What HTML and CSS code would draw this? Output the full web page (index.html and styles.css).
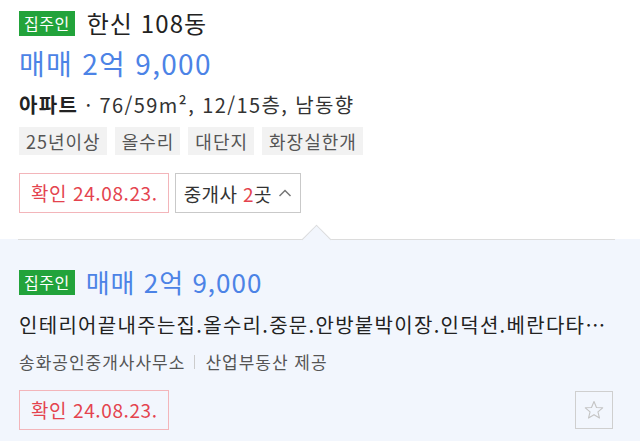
FILE: index.html
```html
<!DOCTYPE html>
<html lang="ko">
  <head>
    <meta charset="UTF-8" />
    <meta name="viewport" content="width=device-width, initial-scale=1.0" />
    <title>매물 상세</title>
    <link rel="stylesheet" href="styles.css">
  </head>
  <body>
    <div class="item">
      <div class="item-head">
        <span class="badge">집주인</span>
        <h2 class="name">한신 108동</h2>
      </div>
      <p class="price">매매 2억 9,000</p>
      <p class="spec"><strong>아파트</strong> · 76/59m², 12/15층, 남동향</p>
      <div class="tags">
        <span class="tag">25년이상</span>
        <span class="tag">올수리</span>
        <span class="tag">대단지</span>
        <span class="tag">화장실한개</span>
      </div>
      <div class="actions">
        <span class="confirm">확인 24.08.23.</span>
        <button class="agents" type="button">
          <span>중개사 <em>2</em>곳</span>
          <svg width="14" height="10" viewBox="0 0 14 10"><path d="M1.5 8 L7 2.5 L12.5 8" fill="none" stroke="#777" stroke-width="1.5" /></svg>
        </button>
      </div>
    </div>

    <div class="detail">
      <div class="detail-inner">
        <div class="detail-head">
          <span class="badge">집주인</span>
          <span class="detail-price">매매 2억 9,000</span>
        </div>
        <p class="desc">인테리어끝내주는집.올수리.중문.안방붙박이장.인덕션.베란다타…</p>
        <p class="agent">송화공인중개사사무소<span class="sep"></span>산업부동산 제공</p>
        <div class="detail-foot">
          <span class="confirm">확인 24.08.23.</span>
          <button class="fav" type="button">
            <svg width="22" height="22" viewBox="0 0 24 24"><path d="M12 2.8 L14.7 9.2 L21.5 9.6 L16.3 14 L18 20.8 L12 17.1 L6 20.8 L7.7 14 L2.5 9.6 L9.3 9.2 Z" fill="none" stroke="#c4c4c4" stroke-width="1.2" stroke-linejoin="round" /></svg>
          </button>
        </div>
      </div>
    </div>
  </body>
</html>
```

FILE: styles.css
```css
body {
  margin: 0;
  background-color: white;
  font-family: "Noto Sans CJK KR", "Noto Sans", sans-serif;
  color: #222;
}
p,
h2 {
  margin: 0;
}
.item {
  padding: 8px 25px 0 19px;
}
.item-head {
  display: flex;
  align-items: center;
  gap: 12px;
  height: 30px;
}
.badge {
  display: inline-block;
  background-color: #22a33b;
  color: white;
  font-size: 16px;
  line-height: 25px;
  height: 25px;
  padding: 0 5px;
  letter-spacing: 0.5px;
}
.name {
  font-size: 24px;
  font-weight: 400;
  line-height: 30px;
  letter-spacing: 1.1px;
}
.price {
  margin-top: 10px;
  font-size: 28px;
  line-height: 30px;
  letter-spacing: 1.3px;
  color: #4c83e6;
}
.spec {
  margin-top: 15px;
  font-size: 20px;
  line-height: 24px;
  letter-spacing: 1.4px;
  color: #333;
}
.spec strong {
  color: #222;
}
.tags {
  display: flex;
  gap: 8px;
  margin-top: 10px;
}
.tag {
  background-color: #f2f2f2;
  color: #555;
  font-size: 18px;
  line-height: 28px;
  letter-spacing: 1px;
  padding: 0 6px 0 7px;
}
.actions {
  display: flex;
  gap: 6px;
  margin-top: 18px;
}
.confirm {
  display: inline-block;
  border: 1px solid #f3b5ba;
  color: #e4434e;
  font-size: 19px;
  line-height: 38px;
  letter-spacing: 0.6px;
  padding: 0 10px 0 11px;
}
.agents {
  display: flex;
  align-items: center;
  border: 1px solid #c9c9c9;
  background-color: white;
  font-family: inherit;
  font-size: 19px;
  letter-spacing: 0.4px;
  color: #333;
  height: 40px;
  padding: 0 8px;
}
.agents em {
  font-style: normal;
  color: #e4434e;
}
.agents svg {
  margin-left: 6px;
}

.detail {
  margin-top: 26px;
  background-color: #f2f6fd;
  padding: 0 25px 11px 18px;
}
.detail-inner {
  position: relative;
  border-top: 1px solid #dcdcdc;
  padding: 28px 0 0 1px;
}
.detail-inner::before {
  content: "";
  position: absolute;
  top: -11px;
  left: 288px;
  width: 20px;
  height: 20px;
  background-color: #f2f6fd;
  border-top: 1px solid #dcdcdc;
  border-left: 1px solid #dcdcdc;
  transform: rotate(45deg);
}
.detail-head {
  display: flex;
  align-items: center;
  gap: 11px;
  height: 28px;
}
.detail-price {
  font-size: 26px;
  line-height: 28px;
  letter-spacing: 1px;
  color: #4c83e6;
}
.desc {
  margin-top: 17px;
  font-size: 20px;
  line-height: 24px;
  letter-spacing: 1.3px;
  white-space: nowrap;
}
.agent {
  margin-top: 14px;
  font-size: 17px;
  line-height: 22px;
  letter-spacing: 1px;
  color: #555;
  display: flex;
  align-items: center;
}
.sep {
  display: inline-block;
  width: 1px;
  height: 14px;
  background-color: #ccc;
  margin: 0 10px 0 9px;
}
.detail-foot {
  display: flex;
  justify-content: space-between;
  align-items: center;
  margin-top: 17px;
}
.fav {
  display: flex;
  align-items: center;
  justify-content: center;
  width: 38px;
  height: 38px;
  border: 1px solid #cfcfcf;
  background-color: #f2f6fd;
  padding: 0;
  margin-right: 2px;
}
```
